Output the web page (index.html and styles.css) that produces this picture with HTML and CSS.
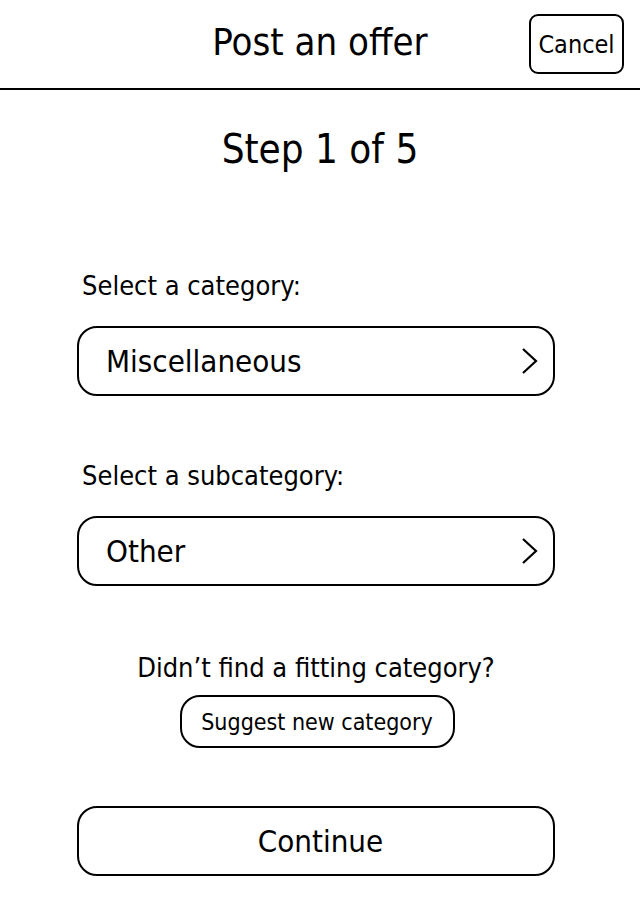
FILE: index.html
```html
<!DOCTYPE html>
<html>
<head>
<meta charset="utf-8">
<link rel="stylesheet" href="styles.css">
</head>
<body>
<header class="topbar">
  <h1 class="title">Post an offer</h1>
  <button class="cancel">Cancel</button>
</header>
<main class="content">
  <h2 class="step">Step 1 of 5</h2>
  <section class="field field-first">
    <div class="label">Select a category:</div>
    <div class="select">
      <span class="select-text">Miscellaneous</span>
      <svg class="chev" width="18" height="28" viewBox="0 0 18 28"><path d="M2 2 L15 14 L2 26" fill="none" stroke="#000" stroke-width="2.2" stroke-linejoin="miter"/></svg>
    </div>
  </section>
  <section class="field">
    <div class="label">Select a subcategory:</div>
    <div class="select">
      <span class="select-text">Other</span>
      <svg class="chev" width="18" height="28" viewBox="0 0 18 28"><path d="M2 2 L15 14 L2 26" fill="none" stroke="#000" stroke-width="2.2" stroke-linejoin="miter"/></svg>
    </div>
  </section>
  <section class="suggest">
    <div class="question">Didn’t find a fitting category?</div>
    <button class="suggest-btn">Suggest new category</button>
  </section>
  <button class="continue">Continue</button>
</main>
</body>
</html>
```
FILE: styles.css
```css
* { box-sizing: border-box; }
html, body { margin: 0; padding: 0; background: #fff; }
body {
  width: 640px;
  height: 920px;
  font-family: "DejaVu Sans Condensed", "DejaVu Sans", sans-serif;
  font-stretch: condensed;
  color: #000;
}
button { font-family: inherit; font-stretch: inherit; color: #000; background: #fff; cursor: pointer; }
.topbar {
  position: relative;
  height: 90px;
  border-bottom: 2px solid #000;
  display: flex;
  align-items: center;
  justify-content: center;
}
.title {
  margin: 0;
  font-weight: normal;
  font-size: 38px;
  line-height: 1;
  margin-top: -5px;
}
.cancel {
  position: absolute;
  right: 16px;
  top: 14px;
  width: 95px;
  height: 60px;
  border: 2px solid #000;
  border-radius: 9px;
  font-size: 25px;
  padding: 0;
}
.content {
  display: flex;
  flex-direction: column;
  align-items: center;
  padding: 34px 0 0;
}
.step {
  margin: 0;
  font-weight: normal;
  font-size: 40px;
  line-height: 50px;
}
.field {
  width: 478px;
  margin-right: 8px;
  display: flex;
  flex-direction: column;
}
.field-first { margin-top: 97px; }
.field + .field { margin-top: 65px; }
.label {
  font-size: 27px;
  line-height: 30px;
  padding-left: 5px;
  margin-bottom: 25px;
}
.select {
  height: 70px;
  border: 2px solid #000;
  border-radius: 20px;
  display: flex;
  align-items: center;
  justify-content: space-between;
  padding: 0 14px 0 27px;
}
.select-text { font-size: 31px; }
.chev { display: block; }
.suggest {
  margin-top: 65px;
  margin-right: 8px;
  display: flex;
  flex-direction: column;
  align-items: center;
}
.question {
  font-size: 27px;
  line-height: 34px;
}
.suggest-btn {
  margin-top: 10px;
  margin-left: 2px;
  width: 275px;
  height: 53px;
  border: 2px solid #000;
  border-radius: 20px;
  font-size: 23px;
  padding: 0;
}
.continue {
  margin-top: 58px;
  margin-right: 8px;
  width: 478px;
  height: 70px;
  border: 2px solid #000;
  border-radius: 20px;
  font-size: 31px;
  padding: 0 0 0 9px;
}
```
